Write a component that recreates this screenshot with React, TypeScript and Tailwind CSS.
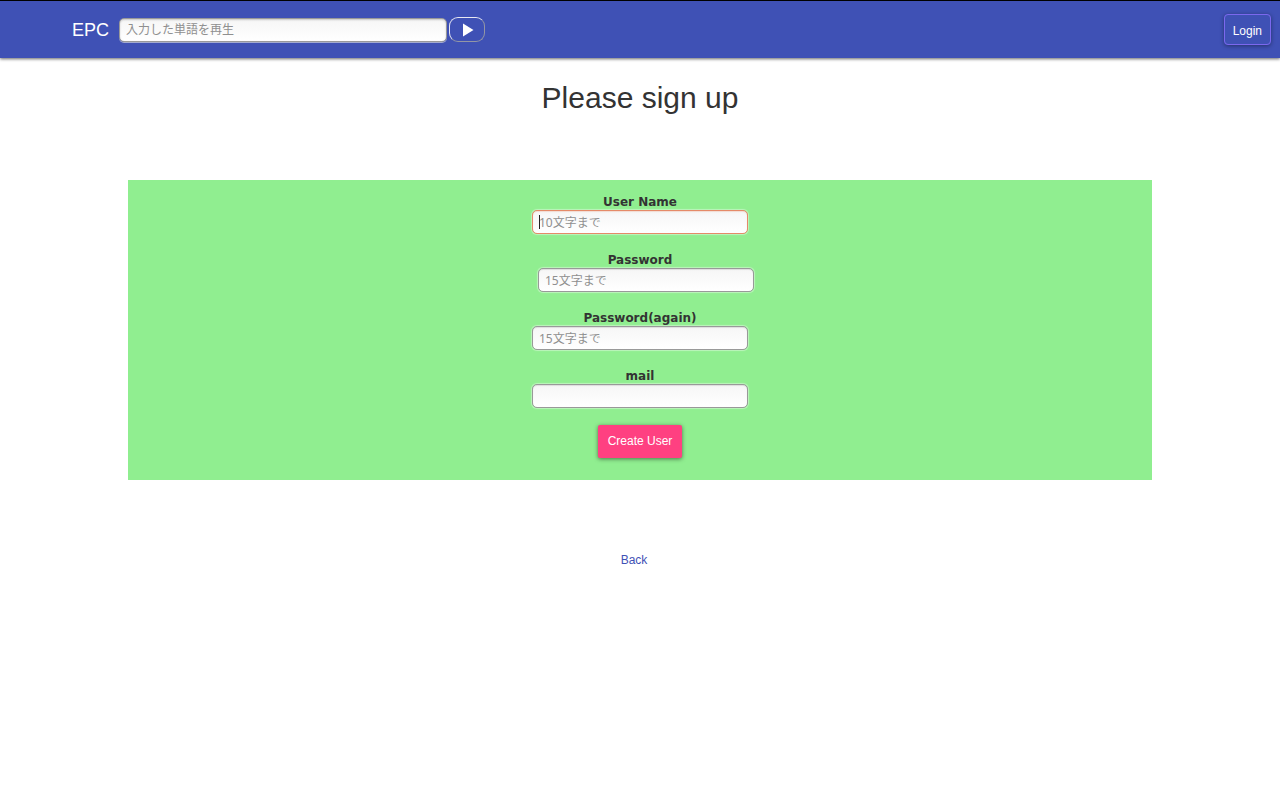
import React from "react";

const inputStyle =
  "h-6 rounded-[5px] border px-1.5 font-['Noto_Sans','Noto_Sans_CJK_JP',sans-serif] text-[12px] text-[#333] placeholder:text-[#8f8f8f] bg-linear-to-b from-[#f6f6f6] to-white outline-none";

type FieldProps = {
  id: string;
  label: string;
  type?: string;
  placeholder?: string;
  active?: boolean;
  indented?: boolean;
};

function Field({ id, label, type = "text", placeholder, active, indented }: FieldProps) {
  return (
    <div className="flex w-full flex-col items-center">
      <label
        htmlFor={id}
        className="font-['DejaVu_Sans',sans-serif] text-[12px] leading-4 font-bold text-[#333]"
      >
        {label}
      </label>
      <div className={indented ? "pl-3" : ""}>
        <div className="relative flex">
          <input
            id={id}
            type={type}
            placeholder={placeholder}
            className={`${inputStyle} w-54 caret-transparent ${
              active
                ? "border-[#e58a69] shadow-[0_0_1px_1px_rgba(255,255,255,0.4),inset_0_1px_1px_rgba(229,138,105,0.25)]"
                : "border-[#999] shadow-[0_0_1px_1px_rgba(255,255,255,0.4),inset_0_1px_1px_rgba(0,0,0,0.1)]"
            }`}
          />
          {active && <span className="absolute top-[5px] left-[7px] h-3.5 w-px bg-[#222]" />}
        </div>
      </div>
    </div>
  );
}

export default function App() {
  return (
    <div className="min-h-screen bg-white font-['Liberation_Sans',Arial,sans-serif] text-[#333]">
      <header className="flex h-[58px] items-center border-t border-black bg-[#3f51b5] pr-[9px] pl-18 text-white shadow-[0_1px_3px_rgba(0,0,0,0.6)]">
        <a href="#home" className="text-[18px] leading-6">
          EPC
        </a>
        <form className="ml-2.5 flex items-center gap-0.5" onSubmit={(e) => e.preventDefault()}>
          <input
            type="text"
            aria-label="入力した単語を再生"
            placeholder="入力した単語を再生"
            className={`${inputStyle} w-82 border-[#999] shadow-[0_1px_0_#a4abd0,inset_0_1px_2px_rgba(0,0,0,0.2)]`}
          />
          <button
            type="submit"
            aria-label="再生"
            className="flex h-[25px] w-9 items-center justify-center rounded-[9px] border border-t-[#e8e8f2] border-r-[#9396a5] border-b-[#9396a5] border-l-[#e8e8f2]"
          >
            <svg viewBox="0 0 12 14" className="ml-0.5 h-3.5 w-3" fill="white">
              <path d="M1 .5v13l10.5-6.5z" />
            </svg>
          </button>
        </form>
        <a
          href="#login"
          className="ml-auto flex h-[31px] items-center rounded-[4px] border border-[#7b68ee] px-2 pt-0.5 text-[12px] shadow-[0_1px_4px_rgba(0,0,0,0.4)]"
        >
          Login
        </a>
      </header>

      <main>
        <h1 className="pt-5 text-center text-[30px] leading-10">Please sign up</h1>
        <form
          className="mx-auto mt-[62px] flex w-4/5 flex-col items-center bg-[#90ee90] pt-3.5 pb-[22px]"
          onSubmit={(e) => e.preventDefault()}
        >
          <div className="flex w-full flex-col gap-[18px]">
            <Field id="user-name" label="User Name" placeholder="10文字まで" active />
            <Field id="password" label="Password" type="password" placeholder="15文字まで" indented />
            <Field
              id="password-again"
              label="Password(again)"
              type="password"
              placeholder="15文字まで"
            />
            <Field id="mail" label="mail" />
          </div>
          <button
            type="submit"
            className="mt-[17px] h-[33px] rounded-[2px] bg-[#ff4081] px-2.5 pb-0.5 text-[12px] text-white shadow-[0_1px_4px_rgba(0,0,0,0.5)]"
          >
            Create User
          </button>
        </form>
        <div className="mt-18 pr-3 text-center text-[12px] leading-4">
          <a href="#back" className="text-[#3f51b5]">
            Back
          </a>
        </div>
      </main>
    </div>
  );
}
